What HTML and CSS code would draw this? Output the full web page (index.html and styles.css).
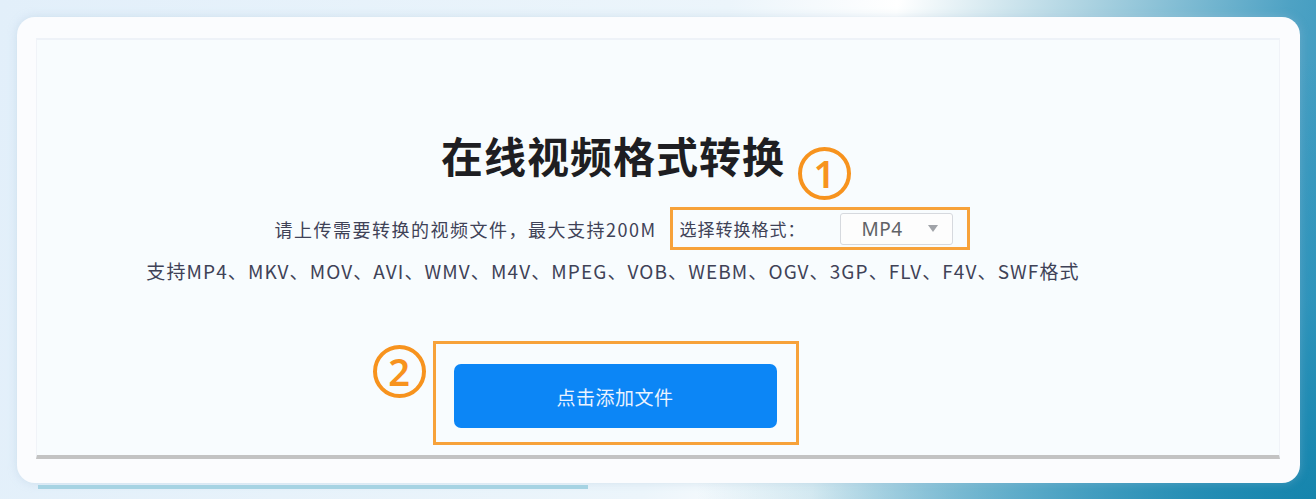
FILE: index.html
```html
<!DOCTYPE html>
<html lang="zh-CN">
<head>
<meta charset="utf-8">
<title>在线视频格式转换</title>
<link rel="stylesheet" href="styles.css">
</head>
<body>
<div class="stage">
  <div class="card">
    <div class="panel">
      <div class="content">
        <div class="title-wrap">
          <h1 class="title">在线视频格式转换</h1>
          <span class="badge badge-one">1</span>
        </div>
        <div class="row">
          <span class="hint">请上传需要转换的视频文件，最大支持200M</span>
          <span class="mark-box">
            <span class="label">选择转换格式：</span>
            <span class="select"><span class="select-value">MP4</span><span class="caret"></span></span>
          </span>
        </div>
        <p class="formats">支持MP4、MKV、MOV、AVI、WMV、M4V、MPEG、VOB、WEBM、OGV、3GP、FLV、F4V、SWF格式</p>
        <div class="btn-wrap">
          <span class="badge badge-two">2</span>
          <div class="btn-box">
            <button class="add-btn">点击添加文件</button>
          </div>
        </div>
      </div>
    </div>
  </div>
  <div class="progress"></div>
</div>
</body>
</html>
```

FILE: styles.css
```css
* { box-sizing: border-box; }
html, body { margin: 0; padding: 0; }
body {
  width: 1316px;
  height: 499px;
  overflow: hidden;
  font-family: "Noto Sans CJK SC", "Noto Sans", sans-serif;
  background:
    radial-gradient(ellipse 620px 440px at 100% 100%, rgba(20,132,172,0.95) 0%, rgba(40,145,185,0.6) 45%, rgba(80,165,200,0) 100%),
    linear-gradient(100deg, #e2effa 0%, #ecf5fb 52%, #ffffff 64%, #a9d1e0 78%, #4ea2c4 92%, #2e93bb 100%);
}
.stage {
  padding: 17px 16px 0 17px;
}
.card {
  width: 1283px;
  height: 466px;
  background: #fbfcfe;
  border-radius: 18px;
  padding: 21px 20px 24px 19px;
  box-shadow: 0 0 10px rgba(160, 190, 215, 0.35);
}
.panel {
  height: 421px;
  background: #f8fcfe;
  border-top: 2px solid #eef2f8;
  border-left: 1px solid #f0f3f8;
  border-right: 1px solid #f0f3f8;
  border-bottom: 4px solid #c3c3c3;
}
.content {
  padding: 85px 90px 0 0;
  display: flex;
  flex-direction: column;
  align-items: center;
}
.title-wrap {
  position: relative;
}
.title {
  margin: 0;
  font-size: 42px;
  line-height: 60px;
  font-weight: 700;
  color: #1e1e22;
  letter-spacing: 1px;
}
.badge {
  position: absolute;
  width: 53px;
  height: 53px;
  border: 4px solid #f7931e;
  border-radius: 50%;
  color: #f7931e;
  font-family: "Noto Sans", sans-serif;
  font-size: 38px;
  line-height: 44px;
  text-align: center;
  font-weight: 600;
}
.badge-one {
  left: 357px;
  top: 22px;
}
.row {
  margin-top: 22px;
  display: flex;
  align-items: center;
  margin-left: 18px;
}
.hint {
  font-size: 18px;
  color: #3f4257;
  letter-spacing: 1.5px;
}
.mark-box {
  margin-left: 13px;
  height: 43px;
  width: 300px;
  border: 3px solid #f7a23a;
  display: flex;
  align-items: center;
  padding: 0 14px 0 7px;
}
.label {
  font-size: 17px;
  color: #3f4257;
  letter-spacing: 1px;
}
.select {
  margin-left: auto;
  width: 113px;
  height: 32px;
  border: 1px solid #d6d9de;
  border-radius: 3px;
  background: #fdfdfd;
  display: flex;
  align-items: center;
  padding: 0 14px 0 21px;
}
.select-value {
  font-family: "Noto Sans", sans-serif;
  font-size: 19px;
  color: #606266;
  letter-spacing: 0.5px;
}
.caret {
  margin-left: auto;
  width: 0;
  height: 0;
  border-left: 5px solid transparent;
  border-right: 5px solid transparent;
  border-top: 7px solid #a0a3a8;
}
.formats {
  margin: 8px 0 0 0;
  font-size: 19px;
  line-height: 26px;
  color: #3f4257;
  letter-spacing: 1.1px;
}
.btn-wrap {
  position: relative;
  margin-top: 57px;
  margin-left: 5px;
}
.badge-two {
  left: -60px;
  top: 4px;
}
.btn-box {
  width: 366px;
  height: 104px;
  border: 3px solid #f7a23a;
  padding: 20px 19px 14px 18px;
}
.add-btn {
  display: block;
  width: 100%;
  height: 64px;
  border: none;
  border-radius: 7px;
  background: #0c86f6;
  color: #eaf3ff;
  font-family: "Noto Sans CJK SC", sans-serif;
  font-size: 19px;
  letter-spacing: 0.5px;
  cursor: pointer;
}
.progress {
  margin: 2px 0 0 21px;
  width: 550px;
  height: 4px;
  background: #a6d3e3;
}
```
